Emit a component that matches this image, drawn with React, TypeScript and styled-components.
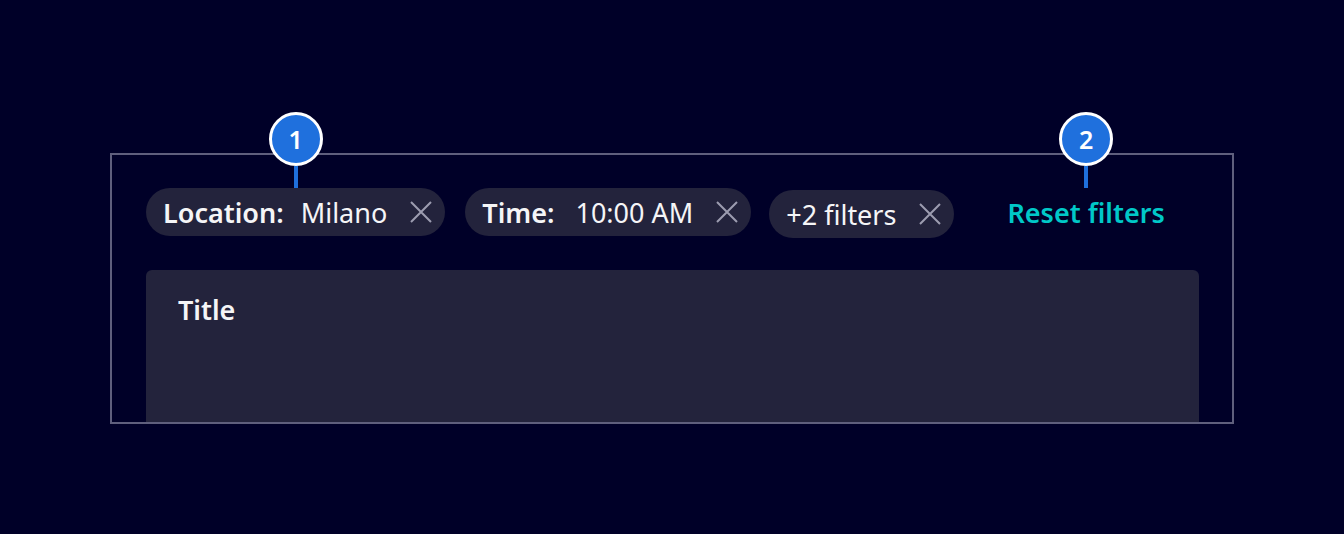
import React from 'react'

import styled, { createGlobalStyle } from 'styled-components'

const GlobalStyle = createGlobalStyle`
  body {
    margin: 0;
    background: #000028;
    font-family: 'Noto Sans', 'Open Sans', sans-serif;
    color: #f5f5f7;
  }
`

const Page = styled.div`
  padding: 153px 0 0 110px;
  height: 534px;
  box-sizing: border-box;
`

const Frame = styled.div`
  width: 1124px;
  height: 271px;
  box-sizing: border-box;
  border: 2px solid #5f5f7d;
  padding: 33px 33px 0 34px;
  display: flex;
  flex-direction: column;
`

const FilterRow = styled.div`
  display: flex;
  align-items: flex-start;
  height: 48px;
  margin-bottom: 34px;
`

const Chip = styled.div<{ $drop?: number; $gap?: number }>`
  position: relative;
  display: flex;
  align-items: center;
  height: 48px;
  box-sizing: border-box;
  padding: 0 13px 0 17px;
  margin-top: ${(p) => p.$drop ?? 0}px;
  margin-right: ${(p) => p.$gap ?? 20}px;
  border-radius: 24px;
  background: #23233c;
  font-size: 27px;
  white-space: nowrap;
`

const ChipLabel = styled.span<{ $space?: number }>`
  font-weight: 600;
  margin-right: ${(p) => p.$space ?? 18}px;
`

const ChipValue = styled.span`
  font-weight: 400;
`

const CloseButton = styled.button`
  display: flex;
  align-items: center;
  justify-content: center;
  margin-left: 23px;
  padding: 0;
  width: 22px;
  height: 22px;
  border: none;
  background: none;
  color: #9c9cb0;
  cursor: pointer;
`

const ResetLink = styled.button`
  position: relative;
  height: 48px;
  margin-left: 37px;
  padding: 0 16px;
  border: none;
  background: none;
  color: #00c8c8;
  font-family: inherit;
  font-size: 27px;
  font-weight: 600;
  cursor: pointer;
`

const Callout = styled.div`
  position: absolute;
  left: 50%;
  bottom: 100%;
  transform: translateX(-50%);
  display: flex;
  flex-direction: column;
  align-items: center;
  pointer-events: none;
`

const Badge = styled.div`
  width: 54px;
  height: 54px;
  box-sizing: border-box;
  border: 3px solid #ffffff;
  border-radius: 50%;
  background: #1f70dd;
  color: #ffffff;
  display: flex;
  align-items: center;
  justify-content: center;
  font-family: 'Noto Sans', sans-serif;
  font-size: 25px;
  font-weight: 600;
`

const Stem = styled.div`
  width: 4px;
  height: 22px;
  background: #1f70dd;
`

const Card = styled.div`
  flex: 1;
  background: #23233c;
  border-radius: 6px 6px 0 0;
  padding: 22px 32px;
`

const CardTitle = styled.div`
  font-size: 27px;
  font-weight: 600;
  line-height: 36px;
`

const CloseIcon = () => (
  <svg width="22" height="22" viewBox="0 0 22 22" fill="none">
    <path d="M1 1 L21 21 M21 1 L1 21" stroke="currentColor" strokeWidth="2" />
  </svg>
)

const Marker = ({ n }: { n: number }) => (
  <Callout>
    <Badge>{n}</Badge>
    <Stem />
  </Callout>
)

const App = () => (
  <>
    <GlobalStyle />
    <Page>
      <Frame>
        <FilterRow>
          <Chip $gap={20}>
            <Marker n={1} />
            <ChipLabel $space={17}>Location:</ChipLabel>
            <ChipValue>Milano</ChipValue>
            <CloseButton aria-label="Remove">
              <CloseIcon />
            </CloseButton>
          </Chip>
          <Chip $gap={18}>
            <ChipLabel $space={21}>Time:</ChipLabel>
            <ChipValue>10:00 AM</ChipValue>
            <CloseButton aria-label="Remove">
              <CloseIcon />
            </CloseButton>
          </Chip>
          <Chip $drop={2} $gap={0}>
            <ChipValue>+2 filters</ChipValue>
            <CloseButton aria-label="Remove">
              <CloseIcon />
            </CloseButton>
          </Chip>
          <ResetLink>
            <Marker n={2} />
            Reset filters
          </ResetLink>
        </FilterRow>
        <Card>
          <CardTitle>Title</CardTitle>
        </Card>
      </Frame>
    </Page>
  </>
)

export default App
